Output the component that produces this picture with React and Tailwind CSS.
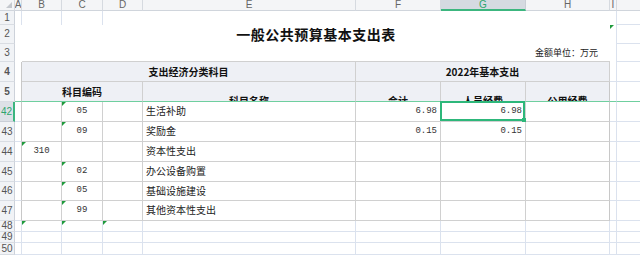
const LINE = 'border-[#d0d0d0]'
const HEAD_BG = 'bg-[#eef0f5]'

function Tri() {
  return (
    <span className="absolute left-0 top-0 w-0 h-0 border-t-[4px] border-r-[4px] border-t-[#1f9a3c] border-r-transparent" />
  )
}

function RowHead({ n, active, green }) {
  return (
    <div
      className={`w-[15px] shrink-0 flex items-center justify-center overflow-hidden text-[10px] leading-none font-['Liberation_Sans',sans-serif] ${
        active
          ? 'bg-[#dde1e7] text-[#2fa56e] border-r-2 border-r-[#3cb67f] border-b border-b-[#c9ced6]'
          : 'bg-[#f1f3f6] text-[#555] border-r border-b border-r-[#cdd2da] border-b-[#d9dde3]'
      } ${green ? '' : ''}`}
    >
      {n}
    </div>
  )
}

function ColHead({ w, label, active }) {
  return (
    <div
      className={`${w} shrink-0 flex items-center justify-center overflow-hidden text-[10px] leading-none ${
        active
          ? 'bg-[#d5dae1] text-[#2fa56e] border-b-2 border-b-[#3cb67f] border-r border-r-[#c9ced6]'
          : 'bg-[#f4f5f7] text-[#666] border-r border-b border-r-[#d6dae0] border-b-[#d0d5dc]'
      }`}
    >
      {label}
    </div>
  )
}

function DataRow({ n, h, b, c, e, f, g, triB, triC, sel }) {
  return (
    <div className={`flex ${h}`}>
      <RowHead n={n} active={sel} />
      <div className="w-[7px] shrink-0 border-r border-b border-r-[#c8c8c8] border-b-[#dbe2ee]" />
      <div className={`relative w-[40px] shrink-0 flex items-center justify-center border-r border-b ${LINE} text-[9px] font-['Liberation_Mono',monospace] text-[#333]`}>
        {triB && <Tri />}
        {b}
      </div>
      <div className={`relative w-[41px] shrink-0 flex items-center justify-center border-r border-b ${LINE} text-[9px] font-['Liberation_Mono',monospace] text-[#333]`}>
        {triC && <Tri />}
        {c}
      </div>
      <div className={`w-[40px] shrink-0 border-r border-b ${LINE}`} />
      <div className={`w-[213px] shrink-0 flex items-center pl-[3px] border-r border-b ${LINE} text-[10px] text-[#222]`}>
        {e}
      </div>
      <div className={`w-[85px] shrink-0 flex items-center justify-end pr-[3px] border-r border-b ${LINE} text-[9px] font-['Liberation_Mono',monospace] text-[#333]`}>
        {f}
      </div>
      <div className={`relative w-[85px] shrink-0 flex items-center justify-end pr-[3px] border-r border-b ${LINE} text-[9px] font-['Liberation_Mono',monospace] text-[#333]`}>
        {sel && (
          <span className="absolute -left-px -top-px right-0 bottom-0 border-2 border-[#2db77a]">
            <span className="absolute -right-[3px] -bottom-[3px] w-[4px] h-[4px] bg-[#2db77a]" />
          </span>
        )}
        {g}
      </div>
      <div className="w-[84px] shrink-0 border-r border-b border-r-[#c8c8c8] border-b-[#d0d0d0]" />
      <div className="w-[7px] shrink-0 border-r border-b border-[#dbe2ee]" />
      <div className="flex-1 border-b border-[#dbe2ee]" />
    </div>
  )
}

function BlankRow({ n, h, tri }) {
  const cell = 'relative shrink-0 border-r border-b border-[#dbe2ee]'
  return (
    <div className={`flex ${h}`}>
      <RowHead n={n} />
      <div className={`w-[7px] ${cell}`} />
      <div className={`w-[40px] ${cell}`}>{tri && <Tri />}</div>
      <div className={`w-[41px] ${cell}`}>{tri && <Tri />}</div>
      <div className={`w-[40px] ${cell}`}>{tri && <Tri />}</div>
      <div className={`w-[213px] ${cell}`} />
      <div className={`w-[85px] ${cell}`} />
      <div className={`w-[85px] ${cell}`} />
      <div className={`w-[84px] ${cell}`} />
      <div className={`w-[7px] ${cell}`} />
      <div className="flex-1 border-b border-[#dbe2ee]" />
    </div>
  )
}

export default function App() {
  return (
    <div className="w-[640px] h-[256px] overflow-hidden bg-white font-['Liberation_Sans','Noto_Sans_CJK_SC',sans-serif]">
      {/* column letters */}
      <div className="flex h-[11px]">
        <div className="w-[15px] shrink-0 relative bg-[#f4f5f7] border-r border-b border-r-[#d6dae0] border-b-[#d0d5dc]">
          <svg className="absolute right-[2px] bottom-[2px]" width="6" height="6" viewBox="0 0 6 6">
            <path d="M6 0 L6 6 L0 6 Z" fill="#c4c8ce" />
          </svg>
        </div>
        <ColHead w="w-[7px]" label="A" />
        <ColHead w="w-[40px]" label="B" />
        <ColHead w="w-[41px]" label="C" />
        <ColHead w="w-[40px]" label="D" />
        <ColHead w="w-[213px]" label="E" />
        <ColHead w="w-[85px]" label="F" />
        <ColHead w="w-[85px]" label="G" active />
        <ColHead w="w-[84px]" label="H" />
        <ColHead w="w-[7px]" label="I" />
        <div className="flex-1 bg-[#f4f5f7] border-b border-b-[#d0d5dc]" />
      </div>

      {/* row 1 */}
      <div className="flex h-[14px]">
        <RowHead n="1" />
        <div className="w-[7px] shrink-0 border-r border-[#dbe2ee]" />
        <div className="w-[40px] shrink-0 border-r border-[#dbe2ee]" />
        <div className="w-[41px] shrink-0 border-r border-[#dbe2ee]" />
        <div className="w-[40px] shrink-0" />
        <div className="w-[213px] shrink-0" />
        <div className="w-[85px] shrink-0" />
        <div className="w-[85px] shrink-0" />
        <div className="w-[84px] shrink-0" />
        <div className="w-[7px] shrink-0 border-r border-[#dbe2ee]" />
        <div className="flex-1 border-b border-[#dbe2ee]" />
      </div>

      {/* row 2 : title */}
      <div className="flex h-[19px]">
        <RowHead n="2" />
        <div className="w-[7px] shrink-0" />
        <div className="w-[588px] shrink-0 flex items-center justify-center text-[14px] font-bold tracking-[0.5px] text-[#111] font-['Noto_Sans_CJK_SC',sans-serif]">
          一般公共预算基本支出表
        </div>
        <div className="relative w-[7px] shrink-0 border-r border-[#dbe2ee]">
          <Tri />
        </div>
        <div className="flex-1 border-b border-[#dbe2ee]" />
      </div>

      {/* row 3 : unit */}
      <div className="flex h-[18px]">
        <RowHead n="3" />
        <div className="w-[7px] shrink-0" />
        <div className={`w-[588px] shrink-0 flex items-center justify-end pr-[12px] border-b ${LINE} text-[9px] text-[#222] font-['Noto_Sans_CJK_SC',sans-serif]`}>
          金额单位：万元
        </div>
        <div className="w-[7px] shrink-0 border-r border-[#dbe2ee]" />
        <div className="flex-1 border-b border-[#dbe2ee]" />
      </div>

      {/* row 4 */}
      <div className="flex h-[20px] text-[10px] font-bold text-[#111] font-['Noto_Sans_CJK_SC',sans-serif]">
        <RowHead n="4" />
        <div className="w-[7px] shrink-0 border-r border-r-[#c8c8c8]" />
        <div className={`w-[334px] shrink-0 flex items-center justify-center ${HEAD_BG} border-r border-b ${LINE}`}>
          支出经济分类科目
        </div>
        <div className={`w-[254px] shrink-0 flex items-center justify-center ${HEAD_BG} border-r border-b ${LINE}`}>
          2022年基本支出
        </div>
        <div className="w-[7px] shrink-0 border-r border-b border-[#dbe2ee]" />
        <div className="flex-1 border-b border-[#dbe2ee]" />
      </div>

      {/* row 5 (frozen edge) */}
      <div className="flex h-[20px] text-[10px] font-bold text-[#111] font-['Noto_Sans_CJK_SC',sans-serif]">
        <RowHead n="5" />
        <div className="w-[7px] shrink-0 border-r border-b border-r-[#c8c8c8] border-b-[#6fcf9f]" />
        <div className={`w-[121px] shrink-0 flex items-center justify-center ${HEAD_BG} border-r border-r-[#d0d0d0] border-b border-b-[#6fcf9f]`}>
          科目编码
        </div>
        <div className={`w-[213px] shrink-0 flex justify-center overflow-hidden ${HEAD_BG} border-r border-r-[#d0d0d0] border-b border-b-[#6fcf9f]`}>
          <span className="pt-[14px] leading-[10px]">科目名称</span>
        </div>
        <div className={`w-[85px] shrink-0 flex justify-center overflow-hidden ${HEAD_BG} border-r border-r-[#d0d0d0] border-b border-b-[#6fcf9f]`}>
          <span className="pt-[14px] leading-[10px]">合计</span>
        </div>
        <div className={`w-[85px] shrink-0 flex justify-center overflow-hidden ${HEAD_BG} border-r border-r-[#d0d0d0] border-b border-b-[#6fcf9f]`}>
          <span className="pt-[14px] leading-[10px]">人员经费</span>
        </div>
        <div className={`w-[84px] shrink-0 flex justify-center overflow-hidden ${HEAD_BG} border-r border-r-[#c8c8c8] border-b border-b-[#6fcf9f]`}>
          <span className="pt-[14px] leading-[10px]">公用经费</span>
        </div>
        <div className="w-[7px] shrink-0 border-r border-r-[#dbe2ee] border-b border-b-[#6fcf9f]" />
        <div className="flex-1 border-b border-b-[#6fcf9f]" />
      </div>

      <DataRow n="42" h="h-[20px]" c="05" e="生活补助" f="6.98" g="6.98" triC sel />
      <DataRow n="43" h="h-[20px]" c="09" e="奖励金" f="0.15" g="0.15" triC />
      <DataRow n="44" h="h-[20px]" b="310" e="资本性支出" triB />
      <DataRow n="45" h="h-[20px]" c="02" e="办公设备购置" triC />
      <DataRow n="46" h="h-[19px]" c="05" e="基础设施建设" triC />
      <DataRow n="47" h="h-[20px]" c="99" e="其他资本性支出" triC />
      <BlankRow n="48" h="h-[11px]" tri />
      <BlankRow n="49" h="h-[11px]" />
      <BlankRow n="50" h="h-[12px]" />
    </div>
  )
}
